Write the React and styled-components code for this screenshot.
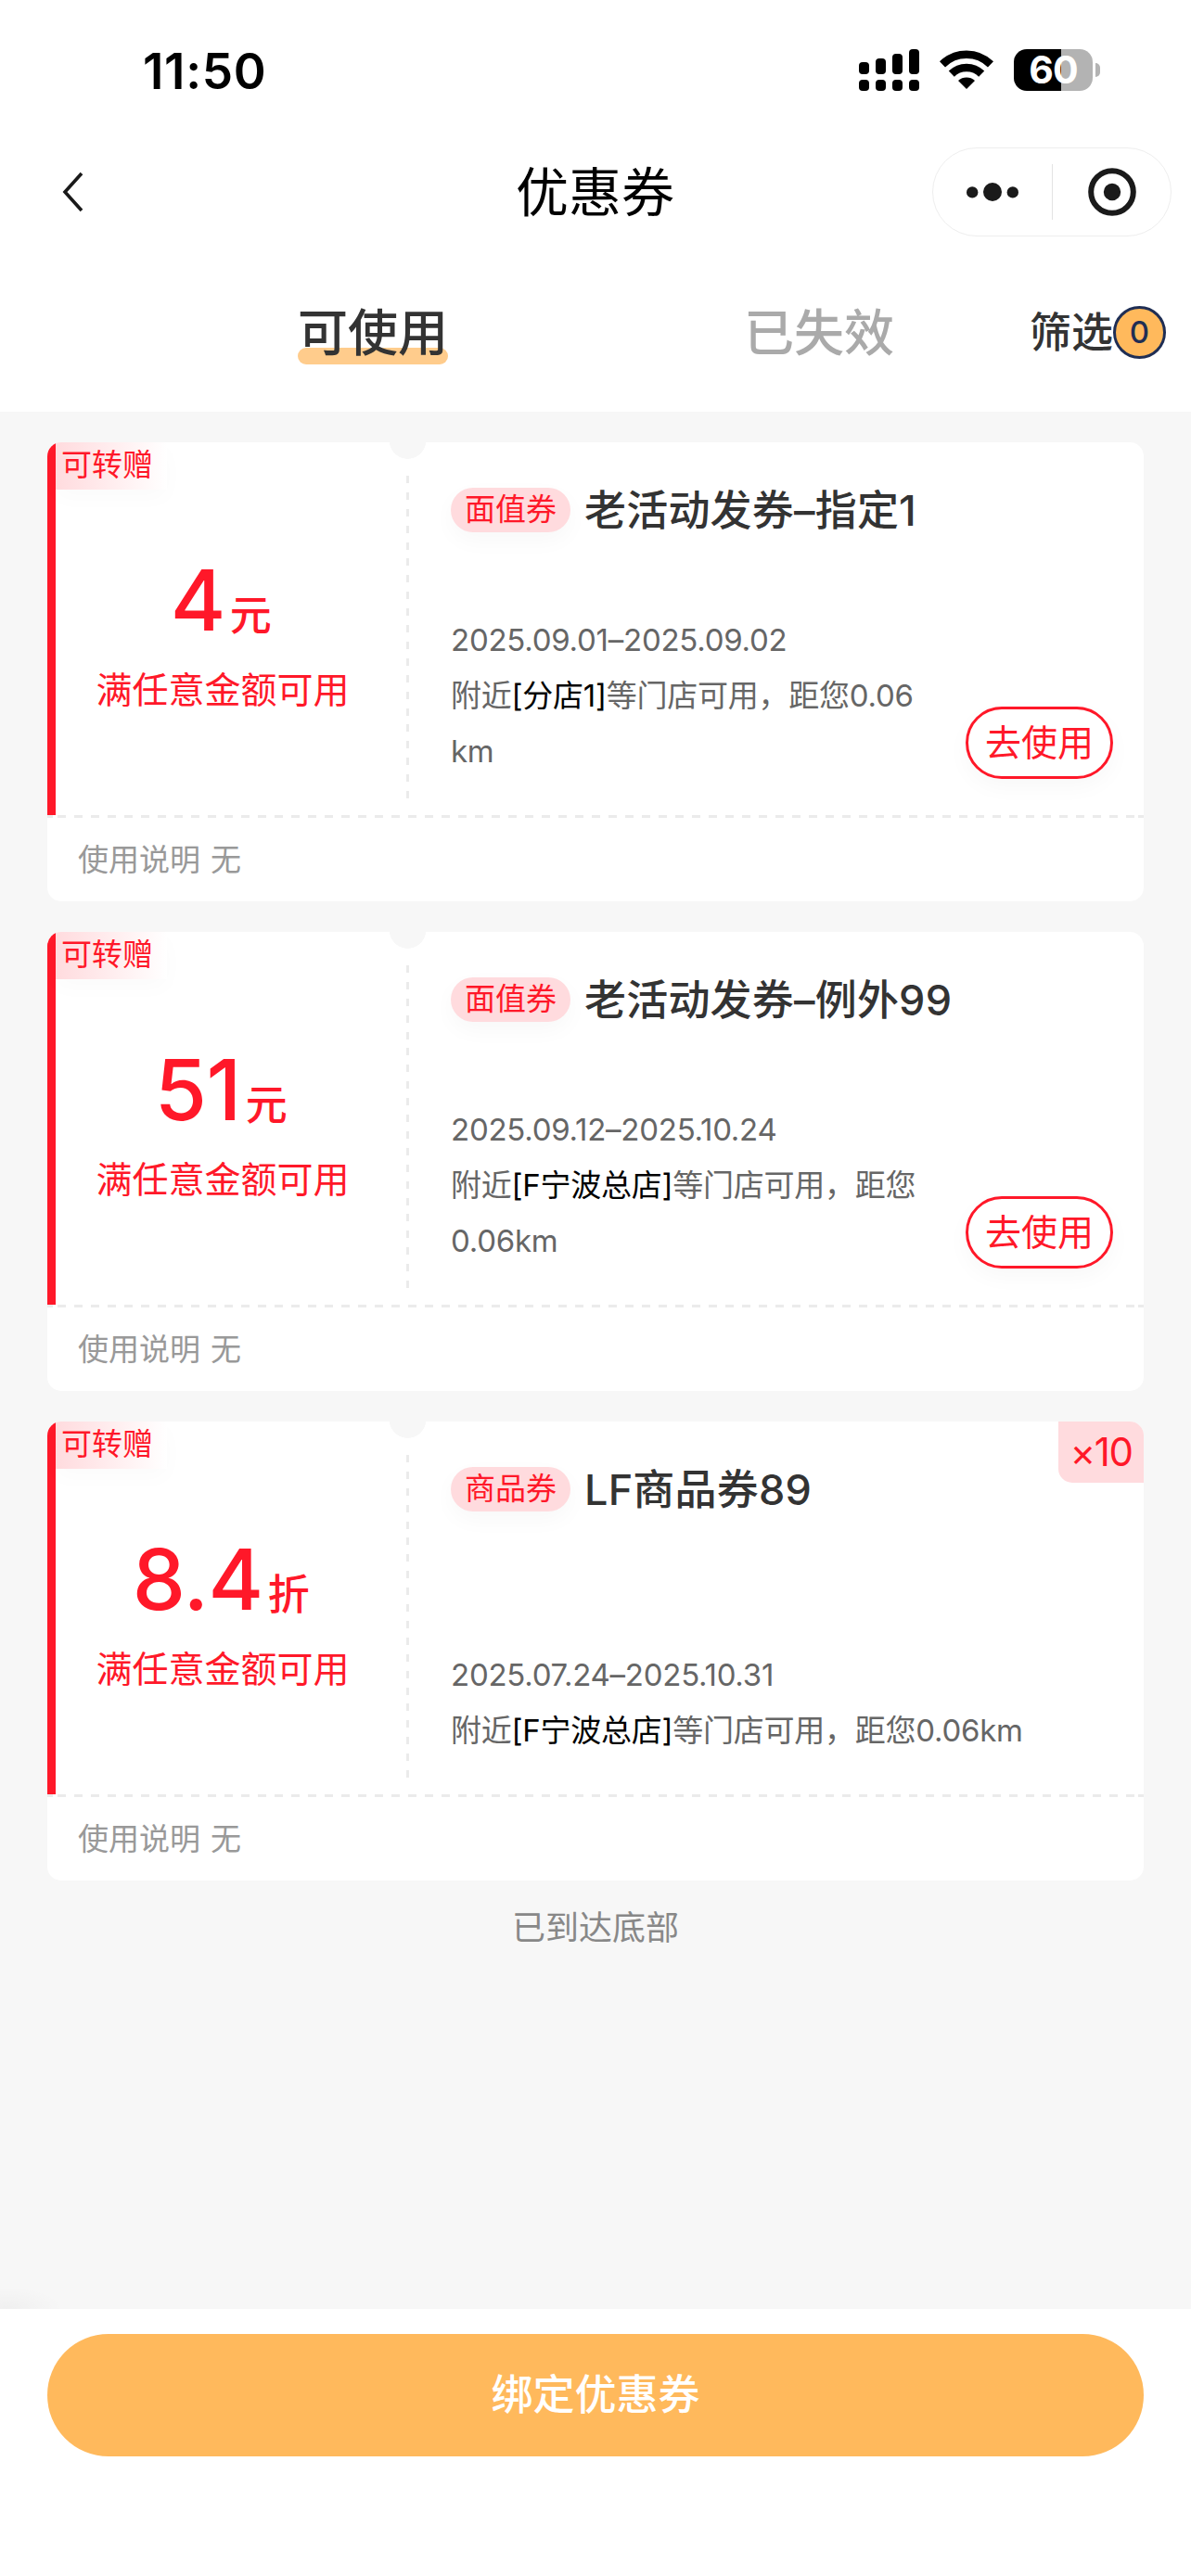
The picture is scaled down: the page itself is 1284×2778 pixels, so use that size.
import styled, { createGlobalStyle } from "styled-components";

const COUPONS = [
	{
		id: 1,
		value: "4",
		unit: "元",
		type: "面值券",
		title: "老活动发券–指定1",
		date: "2025.09.01–2025.09.02",
		store: "[分店1]",
		distance: ["等门店可用，距您0.06", "km"],
		usable: true,
	},
	{
		id: 2,
		value: "51",
		unit: "元",
		type: "面值券",
		title: "老活动发券–例外99",
		date: "2025.09.12–2025.10.24",
		store: "[F宁波总店]",
		distance: ["等门店可用，距您", "0.06km"],
		usable: true,
	},
	{
		id: 3,
		value: "8.4",
		unit: "折",
		type: "商品券",
		title: "LF商品券89",
		date: "2025.07.24–2025.10.31",
		store: "[F宁波总店]",
		distance: ["等门店可用，距您0.06km"],
		count: 10,
	},
];

const SignalIcon = () => (
	<svg width="65" height="45" viewBox="0 0 65 45">
		<rect x="0" y="14" width="11" height="13" rx="4" />
		<rect x="18" y="10" width="11" height="17" rx="4" />
		<rect x="36" y="5" width="11" height="22" rx="4" />
		<rect x="54" y="0" width="11" height="27" rx="4" />
		<rect x="0" y="33" width="11" height="12" rx="4" />
		<rect x="18" y="33" width="11" height="12" rx="4" />
		<rect x="36" y="33" width="11" height="12" rx="4" />
		<rect x="54" y="33" width="11" height="12" rx="4" />
	</svg>
);

const WifiIcon = () => (
	<svg width="58" height="45" viewBox="0 0 58 45">
		<g fill="none" stroke="#000" strokeWidth="8.6">
			<path d="M3 16.4 A37 37 0 0 1 55 16.4" />
			<path d="M12.8 26.6 A23 23 0 0 1 45.2 26.6" />
		</g>
		<path d="M20 34 A13.5 13.5 0 0 1 38 34 L29 43 Z" />
	</svg>
);

const BackIcon = () => (
	<svg width="24" height="44" viewBox="0 0 24 44">
		<path d="M21 2 L3 22 L21 42" fill="none" stroke="#1a1a1a" strokeWidth="3.6" />
	</svg>
);

const MoreIcon = () => (
	<svg width="58" height="22" viewBox="0 0 58 22" fill="#1a1a1a">
		<circle cx="7.2" cy="11.4" r="6.2" />
		<circle cx="29" cy="11" r="10" />
		<circle cx="50.8" cy="11.4" r="6.2" />
	</svg>
);

const CloseIcon = () => (
	<svg width="52" height="52" viewBox="0 0 52 52">
		<circle cx="26" cy="26" r="22.8" fill="none" stroke="#1a1a1a" strokeWidth="6" />
		<circle cx="26" cy="26" r="9.2" fill="#1a1a1a" />
	</svg>
);

const Coupon = ({ coupon }) => (
	<Card>
		<CardBody>
			<ValuePanel>
				<GiftTag>可转赠</GiftTag>
				<Value>
					{coupon.value}
					<Unit>{coupon.unit}</Unit>
				</Value>
				<Condition>满任意金额可用</Condition>
			</ValuePanel>
			<Divider />
			<InfoPanel>
				<TitleRow>
					<TypeTag>{coupon.type}</TypeTag>
					<Title>{coupon.title}</Title>
				</TitleRow>
				<InfoRow>
					<InfoText>
						<InfoLine>{coupon.date}</InfoLine>
						<InfoLine>
							附近<Store>{coupon.store}</Store>
							{coupon.distance[0]}
						</InfoLine>
						{coupon.distance[1] && <InfoLine>{coupon.distance[1]}</InfoLine>}
					</InfoText>
					{coupon.usable && <UseButton>去使用</UseButton>}
				</InfoRow>
			</InfoPanel>
			{coupon.count && <Count>×{coupon.count}</Count>}
		</CardBody>
		<DashedLine />
		<CardFooter>
			<span>使用说明</span>
			<span>无</span>
		</CardFooter>
	</Card>
);

const App = () => {
	return (
		<>
			<GlobalStyle />
			<Page>
				<StatusBar>
					<Time>11:50</Time>
					<StatusIcons>
						<SignalIcon />
						<WifiIcon />
						<Battery>
							<BatteryBody>60</BatteryBody>
							<BatteryCap />
						</Battery>
					</StatusIcons>
				</StatusBar>
				<NavBar>
					<BackIcon />
					<NavTitle>优惠券</NavTitle>
					<Capsule>
						<MoreIcon />
						<CapsuleDivider />
						<CloseIcon />
					</Capsule>
				</NavBar>
				<Tabs>
					<Tab $active>可使用</Tab>
					<Tab>已失效</Tab>
					<Filter>
						筛选
						<FilterCount>0</FilterCount>
					</Filter>
				</Tabs>
				<List>
					{COUPONS.map(coupon => (
						<Coupon key={coupon.id} coupon={coupon} />
					))}
					<ListEnd>已到达底部</ListEnd>
				</List>
				<BottomBar>
					<BindButton>绑定优惠券</BindButton>
				</BottomBar>
			</Page>
		</>
	);
};

export default App;

const GlobalStyle = createGlobalStyle`
	* {
		box-sizing: border-box;
	}
	body {
		margin: 0;
		background-color: #f7f7f7;
		font-family: Inter, "Noto Sans CJK SC", sans-serif;
	}
	svg {
		display: block;
		flex-shrink: 0;
	}
	button {
		font-family: inherit;
		padding: 0;
	}
`;

const Page = styled.div`
	display: flex;
	flex-direction: column;
	width: 1284px;
	height: 2778px;
	background-color: #f7f7f7;
`;

const StatusBar = styled.div`
	display: flex;
	justify-content: space-between;
	align-items: center;
	height: 151px;
	padding: 0 98px 0 154px;
	background-color: #fff;
`;

const Time = styled.div`
	padding-top: 3px;
	font-size: 53px;
	font-weight: 600;
	line-height: 64px;
	letter-spacing: 0.7px;
	color: #000;
`;

const StatusIcons = styled.div`
	display: flex;
	align-items: center;
	gap: 22px;
`;

const Battery = styled.div`
	display: flex;
	align-items: center;
	gap: 3px;
`;

const BatteryBody = styled.div`
	width: 85px;
	height: 45px;
	border-radius: 14px;
	background: linear-gradient(90deg, #000 51px, #b3b3b3 51px);
	color: #fff;
	font-size: 41px;
	font-weight: 700;
	line-height: 45px;
	text-align: center;
	letter-spacing: -1px;
`;

const BatteryCap = styled.div`
	width: 5px;
	height: 15px;
	border-radius: 0 8px 8px 0;
	background-color: #b3b3b3;
`;

const NavBar = styled.div`
	display: grid;
	grid-template-columns: 258px 1fr 258px;
	align-items: center;
	height: 112px;
	padding: 0 21px 0 67px;
	background-color: #fff;
`;

const NavTitle = styled.div`
	padding: 2px 47px 0 0;
	font-size: 57px;
	line-height: 80px;
	text-align: center;
	color: #000;
`;

const Capsule = styled.div`
	display: flex;
	align-items: center;
	height: 96px;
	padding: 0 36px 0 35px;
	border: 1px solid #eee;
	border-radius: 48px;
`;

const CapsuleDivider = styled.div`
	width: 1px;
	height: 60px;
	margin: 0 38px 0 35px;
	background-color: #e3e3e3;
`;

const Tabs = styled.div`
	display: flex;
	align-items: center;
	height: 181px;
	padding: 13px 27px 0 321px;
	background-color: #fff;
`;

const Tab = styled.div`
	position: relative;
	z-index: 0;
	width: 162px;
	margin-right: ${({ $active }) => ($active ? "319px" : "146px")};
	font-size: 54px;
	font-weight: 500;
	line-height: 76px;
	color: ${({ $active }) => ($active ? "#333" : "#aaa")};

	&::after {
		content: "";
		display: ${({ $active }) => ($active ? "block" : "none")};
		position: absolute;
		left: 0;
		right: 0;
		bottom: 5px;
		z-index: -1;
		height: 18px;
		border-radius: 9px;
		background-color: #ffcc8c;
	}
`;

const Filter = styled.div`
	display: flex;
	align-items: center;
	margin-top: -3px;
	font-size: 45px;
	font-weight: 500;
	line-height: 60px;
	color: #333;
`;

const FilterCount = styled.span`
	width: 57px;
	height: 57px;
	border: 3px solid #1f2e54;
	border-radius: 50%;
	background-color: #ffb95c;
	color: #1f2e54;
	font-size: 33px;
	line-height: 50px;
	text-align: center;
`;

const List = styled.div`
	display: flex;
	flex-direction: column;
	flex: 1;
	gap: 33px;
	padding: 33px 51px 0;
	background: radial-gradient(ellipse 60px 24px at 8px 100%, rgba(0, 0, 0, 0.03), transparent);
`;

const Card = styled.div`
	border-radius: 15px;
	background-color: #fff;
	overflow: hidden;
`;

const CardBody = styled.div`
	display: flex;
	position: relative;
	height: 402px;
`;

const ValuePanel = styled.div`
	width: 369px;
	border-left: 9px solid #ff1829;
	color: #ff1829;
	text-align: center;
`;

const GiftTag = styled.div`
	width: 120px;
	height: 51px;
	padding-left: 6px;
	background: linear-gradient(90deg, #ffdbde, #fff);
	box-shadow: 0 9px 24px rgba(0, 0, 0, 0.02);
	font-size: 33px;
	line-height: 49px;
	text-align: left;
	white-space: nowrap;
`;

const Value = styled.div`
	display: flex;
	justify-content: center;
	align-items: baseline;
	gap: 5px;
	margin-top: 64px;
	padding-right: 4px;
	font-size: 91px;
	font-weight: 500;
	line-height: 110px;
	letter-spacing: -0.5px;
`;

const Unit = styled.span`
	font-size: 45px;
`;

const Condition = styled.div`
	margin-top: -3px;
	font-size: 39px;
	line-height: 56px;
`;

// vertical dashes with the half circle cut at the top edge
const Divider = styled.div`
	width: 39px;
	background:
		repeating-linear-gradient(180deg, #ebebeb 0 8px, transparent 8px 17.9px) 18px 36px / 3px 349px no-repeat,
		radial-gradient(circle at 19.5px -2px, #f7f7f7 19.5px, transparent 20px);
`;

const InfoPanel = styled.div`
	display: flex;
	flex-direction: column;
	justify-content: space-between;
	flex: 1;
	padding: 40px 33px 39px 27px;
`;

const TitleRow = styled.div`
	display: flex;
	align-items: center;
	gap: 15px;
	height: 66px;
`;

const TypeTag = styled.span`
	height: 48px;
	padding: 0 15px;
	border-radius: 24px;
	background-color: #ffdbde;
	box-shadow: 0 9px 24px rgba(0, 0, 0, 0.03);
	color: #ff1829;
	font-size: 33px;
	line-height: 47px;
`;

const Title = styled.span`
	padding-top: 2px;
	color: #333;
	font-size: 45px;
	font-weight: 500;
	line-height: 66px;
	letter-spacing: 0.2px;
`;

const InfoRow = styled.div`
	display: flex;
	justify-content: space-between;
	align-items: flex-end;
`;

const InfoText = styled.div`
	display: flex;
	flex-direction: column;
`;

const InfoLine = styled.div`
	height: 60px;
	color: #666;
	font-size: 33px;
	line-height: 60px;
	letter-spacing: -0.25px;
	white-space: nowrap;
`;

const Store = styled.span`
	color: #000;
`;

const UseButton = styled.button`
	width: 159px;
	height: 78px;
	border: 3px solid #ff1829;
	border-radius: 39px;
	background-color: #fff;
	box-shadow: 0 9px 24px rgba(0, 0, 0, 0.03);
	color: #ff1829;
	font-size: 39px;
	line-height: 68px;
`;

const Count = styled.div`
	position: absolute;
	top: 0;
	right: 0;
	width: 92px;
	height: 66px;
	border-bottom-left-radius: 15px;
	background-color: #ffdbde;
	color: #ff1829;
	font-size: 42px;
	line-height: 66px;
	letter-spacing: -1.5px;
	text-align: center;
`;

const DashedLine = styled.div`
	height: 3px;
	background:
		linear-gradient(#ebebeb, #ebebeb) left / 6px 100% no-repeat,
		linear-gradient(#ebebeb, #ebebeb) right / 6px 100% no-repeat,
		repeating-linear-gradient(90deg, #ebebeb 0 9px, transparent 9px 18px) center / 1161px 100% no-repeat;
`;

const CardFooter = styled.div`
	display: flex;
	gap: 11px;
	height: 90px;
	padding-left: 33px;
	color: #999;
	font-size: 33px;
	line-height: 90px;
`;

const ListEnd = styled.div`
	color: #888;
	font-size: 36px;
	line-height: 36px;
	text-align: center;
`;

const BottomBar = styled.div`
	height: 288px;
	padding: 27px 51px 0;
	background-color: #fff;
`;

const BindButton = styled.button`
	display: block;
	width: 100%;
	height: 132px;
	border: none;
	border-radius: 66px;
	background-color: #ffb95c;
	color: #fff;
	font-size: 45px;
	font-weight: 500;
	line-height: 132px;
`;
